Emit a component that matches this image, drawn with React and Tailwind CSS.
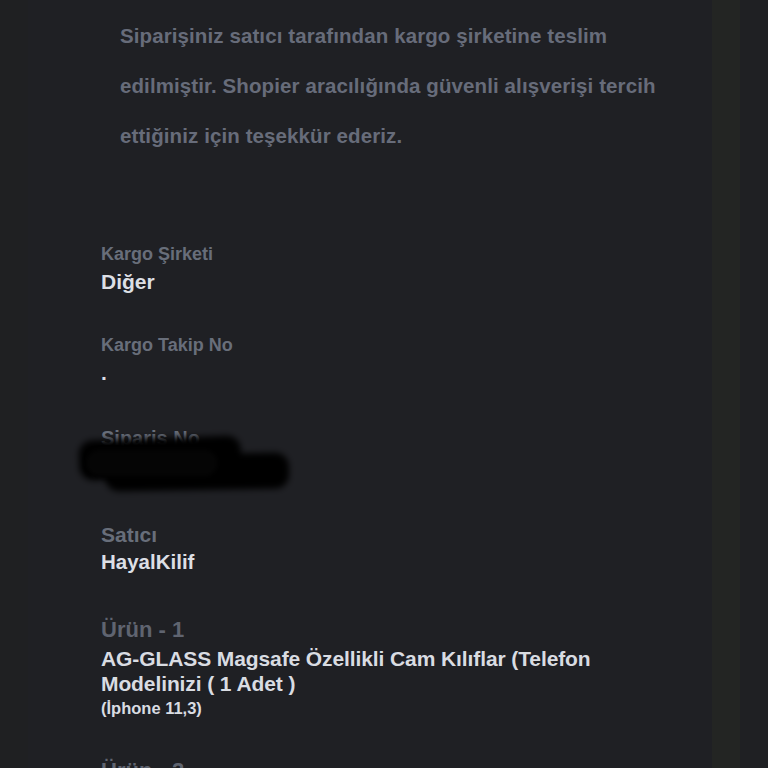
import React from 'react';

const FONT = { fontFamily: '"Liberation Sans", Arial, sans-serif' };

function Field({ label, value, labelClass = 'text-[18px]', valueClass = 'text-[21px]', gap = 'mt-[8px]' }) {
  return (
    <div>
      <div className={`${labelClass} font-semibold text-[#686e7a] leading-none`}>{label}</div>
      <div className={`${gap} ${valueClass} font-bold text-[#dcdfe5] leading-none`}>{value}</div>
    </div>
  );
}

export default function App() {
  return (
    <div className="h-[768px] w-[768px] overflow-hidden bg-[#1e1f22] flex" style={FONT}>
      <div className="w-[28px] bg-[#1f2022]" />
      <div className="w-[684px] bg-[#1f2024] flex flex-col">
        <p className="pl-[92px] pr-[18px] pt-[11px] text-[20.5px] font-bold leading-[50px] tracking-[0.1px] text-[#676c7a]">
          Siparişiniz satıcı tarafından kargo şirketine teslim edilmiştir. Shopier aracılığında güvenli alışverişi tercih ettiğiniz için teşekkür ederiz.
        </p>

        <div className="pl-[73px] mt-[84px] flex flex-col">
          <Field label="Kargo Şirketi" value="Diğer" />
          <div className="mt-[44px]">
            <Field label="Kargo Takip No" value="." />
          </div>

          <div className="mt-[45px] relative">
            <Field label="Sipariş No" value="1234567890" labelClass="text-[20px]" />
            <div className="absolute left-[-22px] top-[10px] w-[162px] h-[40px] bg-black rounded-[14px] blur-[3px] rotate-[-2deg]" />
            <div className="absolute left-[4px] top-[26px] w-[184px] h-[36px] bg-black rounded-[14px] blur-[3px] rotate-[-1deg]" />
            <div className="absolute left-[-14px] top-[22px] w-[130px] h-[26px] bg-[#050505] rounded-[12px] blur-[2px]" />
          </div>

          <div className="mt-[47px]">
            <Field label="Satıcı" value="HayalKilif" labelClass="text-[21px]" valueClass="text-[20.5px]" gap="mt-[7px]" />
          </div>

          <div className="mt-[46px]">
            <div className="text-[22px] font-semibold text-[#5f6470] leading-none">Ürün - 1</div>
            <div className="mt-[5px] text-[21px] font-bold text-[#d9dce2] leading-[25px] tracking-[-0.1px] w-[540px]">
              AG-GLASS Magsafe Özellikli Cam Kılıflar (Telefon Modelinizi ( 1 Adet )
            </div>
            <div className="mt-[4px] text-[16.5px] font-semibold text-[#d9dce2] leading-none">(İphone 11,3)</div>
          </div>

          <div className="mt-[44px] text-[22px] font-semibold text-[#5f6470] leading-none">Ürün - 2</div>
        </div>
      </div>
      <div className="w-[28px] bg-[#232523]" />
      <div className="flex-1 bg-[#1f2023]" />
    </div>
  );
}
